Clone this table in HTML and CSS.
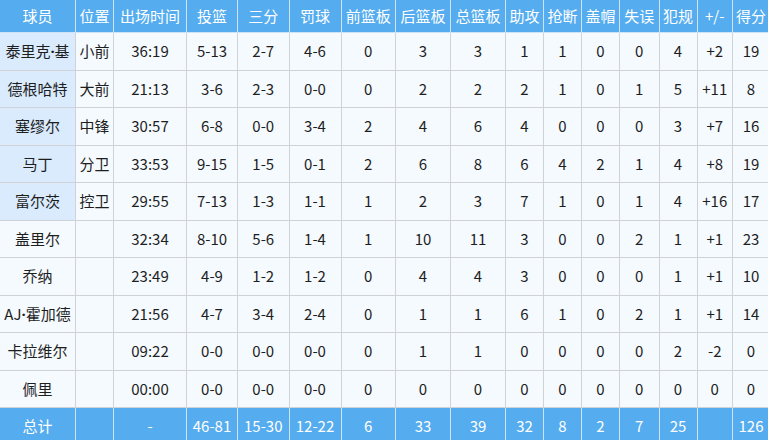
FILE: index.html
```html
<!DOCTYPE html>
<html lang="zh-CN">
<head>
<meta charset="utf-8">
<title>球员数据</title>
<link rel="stylesheet" href="styles.css">
</head>
<body>
<table class="stats">
  <colgroup>
    <col class="c-name"><col class="c-pos"><col class="c-min"><col class="c-fg"><col class="c-3p"><col class="c-ft">
    <col class="c-oreb"><col class="c-dreb"><col class="c-reb"><col class="c-ast"><col class="c-stl"><col class="c-blk">
    <col class="c-tov"><col class="c-pf"><col class="c-pm"><col class="c-pts">
  </colgroup>
  <thead>
    <tr class="head">
      <th>球员</th><th>位置</th><th>出场时间</th><th>投篮</th><th>三分</th><th>罚球</th><th>前篮板</th><th>后篮板</th><th>总篮板</th><th>助攻</th><th>抢断</th><th>盖帽</th><th>失误</th><th>犯规</th><th>+/-</th><th>得分</th>
    </tr>
  </thead>
  <tbody>
    <tr class="row starter"><td class="name">泰里克<span class="dot">·</span>基</td><td>小前</td><td>36:19</td><td>5-13</td><td>2-7</td><td>4-6</td><td>0</td><td>3</td><td>3</td><td>1</td><td>1</td><td>0</td><td>0</td><td>4</td><td>+2</td><td>19</td></tr>
    <tr class="row starter"><td class="name">德根哈特</td><td>大前</td><td>21:13</td><td>3-6</td><td>2-3</td><td>0-0</td><td>0</td><td>2</td><td>2</td><td>2</td><td>1</td><td>0</td><td>1</td><td>5</td><td>+11</td><td>8</td></tr>
    <tr class="row starter"><td class="name">塞缪尔</td><td>中锋</td><td>30:57</td><td>6-8</td><td>0-0</td><td>3-4</td><td>2</td><td>4</td><td>6</td><td>4</td><td>0</td><td>0</td><td>0</td><td>3</td><td>+7</td><td>16</td></tr>
    <tr class="row starter"><td class="name">马丁</td><td>分卫</td><td>33:53</td><td>9-15</td><td>1-5</td><td>0-1</td><td>2</td><td>6</td><td>8</td><td>6</td><td>4</td><td>2</td><td>1</td><td>4</td><td>+8</td><td>19</td></tr>
    <tr class="row starter"><td class="name">富尔茨</td><td>控卫</td><td>29:55</td><td>7-13</td><td>1-3</td><td>1-1</td><td>1</td><td>2</td><td>3</td><td>7</td><td>1</td><td>0</td><td>1</td><td>4</td><td>+16</td><td>17</td></tr>
    <tr class="row"><td class="name">盖里尔</td><td></td><td>32:34</td><td>8-10</td><td>5-6</td><td>1-4</td><td>1</td><td>10</td><td>11</td><td>3</td><td>0</td><td>0</td><td>2</td><td>1</td><td>+1</td><td>23</td></tr>
    <tr class="row"><td class="name">乔纳</td><td></td><td>23:49</td><td>4-9</td><td>1-2</td><td>1-2</td><td>0</td><td>4</td><td>4</td><td>3</td><td>0</td><td>0</td><td>0</td><td>1</td><td>+1</td><td>10</td></tr>
    <tr class="row"><td class="name">AJ<span class="dot">·</span>霍加德</td><td></td><td>21:56</td><td>4-7</td><td>3-4</td><td>2-4</td><td>0</td><td>1</td><td>1</td><td>6</td><td>1</td><td>0</td><td>2</td><td>1</td><td>+1</td><td>14</td></tr>
    <tr class="row"><td class="name">卡拉维尔</td><td></td><td>09:22</td><td>0-0</td><td>0-0</td><td>0-0</td><td>0</td><td>1</td><td>1</td><td>0</td><td>0</td><td>0</td><td>0</td><td>2</td><td>-2</td><td>0</td></tr>
    <tr class="row"><td class="name">佩里</td><td></td><td>00:00</td><td>0-0</td><td>0-0</td><td>0-0</td><td>0</td><td>0</td><td>0</td><td>0</td><td>0</td><td>0</td><td>0</td><td>0</td><td>0</td><td>0</td></tr>
    <tr class="total"><td>总计</td><td></td><td>-</td><td>46-81</td><td>15-30</td><td>12-22</td><td>6</td><td>33</td><td>39</td><td>32</td><td>8</td><td>2</td><td>7</td><td>25</td><td></td><td>126</td></tr>
  </tbody>
</table>
</body>
</html>
```
FILE: styles.css
```css
html, body {
  margin: 0;
  padding: 0;
  overflow: hidden;
  background: #f5faff;
}

.stats {
  border-collapse: collapse;
  table-layout: fixed;
  width: 770px;
  margin: -1px 0 0 -1px;
  font-family: "Microsoft YaHei", "Noto Sans CJK SC", "Noto Sans", sans-serif;
  font-size: 15px;
  color: #1e1e1e;
}

.dot {
  font-family: "Noto Sans", "DejaVu Sans", sans-serif;
  font-weight: bold;
}

.c-name { width: 76px; }
.c-pos { width: 38px; }
.c-min { width: 73px; }
.c-fg { width: 51px; }
.c-3p { width: 51.5px; }
.c-ft { width: 52px; }
.c-oreb { width: 54.5px; }
.c-dreb { width: 55px; }
.c-reb { width: 55px; }
.c-ast { width: 38px; }
.c-stl { width: 38px; }
.c-blk { width: 38px; }
.c-tov { width: 39.5px; }
.c-pf { width: 38px; }
.c-pm { width: 35.5px; }
.c-pts { width: 37px; }

.stats th,
.stats td {
  padding: 0;
  text-align: center;
  white-space: nowrap;
  overflow: hidden;
  border: 1px solid #cfd2d6;
  font-weight: normal;
  line-height: 20px;
}

.head th {
  height: 32px;
  background: #55acee;
  color: #ffffff;
  border-color: #cde4f8;
}

.row td {
  height: 36.5px;
  background: #f5faff;
}

.starter .name {
  background: #d9ebfd;
}

.total td {
  height: 36.5px;
  background: #55acee;
  color: #ffffff;
  border-color: #cde4f8;
  border-top-color: #cfd2d6;
}
```
